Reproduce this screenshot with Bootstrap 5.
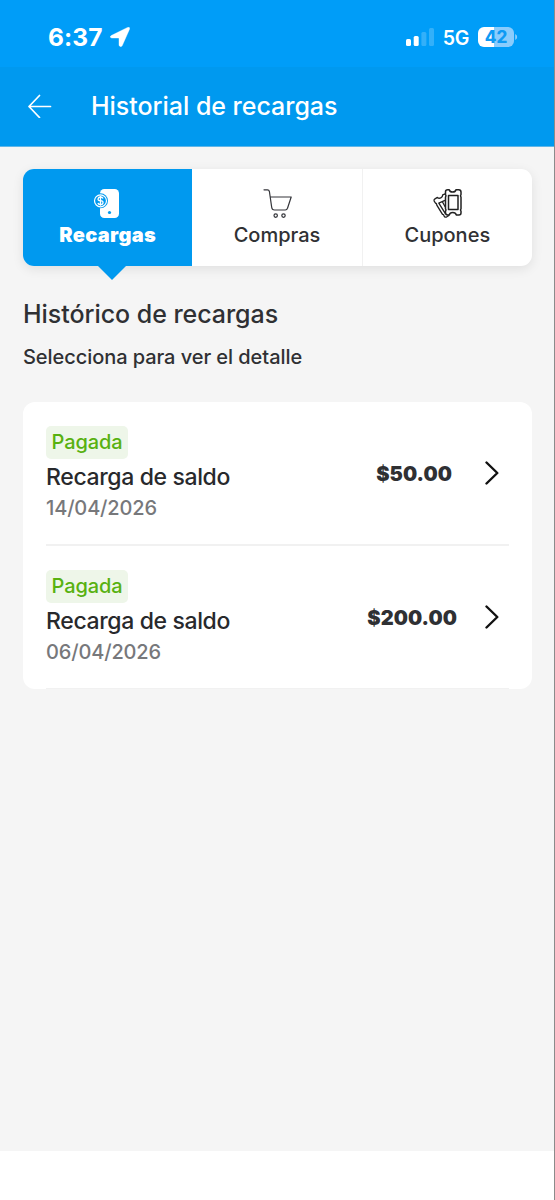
<!DOCTYPE html>
<html lang="es">
<head>
<meta charset="utf-8">
<meta name="viewport" content="width=device-width, initial-scale=1">
<title>Historial de recargas</title>
<link href="https://cdn.jsdelivr.net/npm/bootstrap@5.3.0/dist/css/bootstrap.min.css" rel="stylesheet">
<style>
  body { font-family: Inter, "Liberation Sans", sans-serif; color: #2f3033; background: #f5f5f5; }
  .screen { height: 1200px; border-right: 1px solid #8b8b8b; overflow: hidden; }
  svg { display: block; flex: none; }
  .app-head { background: linear-gradient(#009df8 0 67px, #0099ef 67px); height: 147px; border-bottom: 1px solid #5fb6e8; }
  .status { height: 67px; padding: 23px 36px 0 48px; }
  .clock { font-size: 24.5px; line-height: 28px; font-weight: 700; letter-spacing: .1px; }
  .net { font-size: 19.5px; line-height: 30px; font-weight: 600; letter-spacing: -.3px; margin: 0 9px; }
  .battery { width: 36px; height: 20px; border-radius: 6px; margin-top: 4px; background: linear-gradient(90deg, #fff 16px, #8accfc 16px); color: #0d9bf4; font-size: 17px; line-height: 20px; font-weight: 800; }
  .bar { height: 79px; padding: 0 0 1px 27px; }
  .bar h1 { font-size: 25px; line-height: 30px; font-weight: 500; letter-spacing: -.03px; margin-left: 39px; }
  .content { height: 1004px; padding: 22px 22px 0 23px; }
  .tabs { height: 97px; border-radius: 11px; background: #fff; box-shadow: 0 3px 12px rgba(0,0,0,.09); }
  .tabs button { flex: 1 1 0; border: 0; background: none; padding: 18px 0 0; color: #303134; font-size: 20px; line-height: 28px; font-weight: 500; }
  .tabs button + button + button { border-left: 1px solid #f1f1f1; }
  .tabs svg { width: 34px; height: 34px; }
  .tabs .chosen { background: #0099ef; color: #fff; font-weight: 900; letter-spacing: .35px; border-radius: 11px 0 0 11px; }
  .chosen svg { margin-right: 5px; }
  .chosen::after { content: ""; position: absolute; left: 75px; top: 97px; border: 14px solid transparent; border-bottom: 0; border-top-color: #0099ef; }
  h2 { font-size: 25px; line-height: 30px; font-weight: 500; letter-spacing: -.05px; margin: 33px 0 0; }
  .hint { font-size: 20px; line-height: 26px; font-weight: 500; letter-spacing: -.06px; margin: 15px 0 0; }
  .history { margin-top: 32px; height: 287px; padding: 0 23px; background: #fff; border-radius: 12px; }
  .entry { height: 144px; padding-top: 24px; border-bottom: 2px solid #f1f1f1; }
  .entry:last-child { height: 143px; border-bottom: 1px solid #f1f1f1; }
  .paid { width: 82px; height: 33px; border-radius: 5px; background: #eef6e9; color: #58b110; font-size: 20px; line-height: 33px; font-weight: 500; letter-spacing: -.1px; text-align: center; }
  .what { font-size: 23px; line-height: 30px; font-weight: 500; letter-spacing: -.36px; margin-top: 3px; color: #28292c; }
  .when { font-size: 20px; line-height: 26px; font-weight: 500; letter-spacing: -.15px; margin-top: 3px; color: #77787b; }
  .amount { font-size: 20px; line-height: 26px; font-weight: 900; letter-spacing: .05px; margin: 35px 33px 0 0; }
  .entry:last-child .amount { margin-right: 28px; }
  .go { margin: 36px 10px 0 0; }
  .entry:last-child .go, .entry:first-child .go { margin-top: 35px; }
  .foot { height: 49px; background: #fff; }
</style>
</head>
<body>
<div class="screen">
  <header class="app-head text-white">
    <div class="status d-flex align-items-start">
      <span class="clock">6:37</span>
      <svg class="mt-1" width="20" height="20" viewBox="0 0 20 20" style="margin-left:7px"><path d="M1.2 8.6 17.6.4Q20.1-.3 19.5 2.2L12.2 18.7Q10.6 20.7 9 18.5V11.4Q9 11 8.6 11H1.7Q-1 10.2 1.2 8.6Z" fill="#fff" stroke="#fff" stroke-width=".4"/></svg>
      <svg class="ms-auto" width="28" height="18" viewBox="0 0 28 18" style="margin-top:5px"><g fill="#fff"><rect y="11" width="5" height="7" rx="1.5"/><rect x="7.7" y="8" width="5" height="10" rx="1.5"/><g opacity=".2"><rect x="15.4" y="4" width="5" height="14" rx="1.5"/><rect x="23" width="5" height="18" rx="1.5"/></g></g></svg>
      <span class="net">5G</span>
      <span class="battery text-center">42</span>
      <svg width="4" height="8" viewBox="0 0 4 8" style="margin-top:10px"><path d="M1.2 1Q3.2 2 3.2 4T1.2 7Z" fill="#8accfc"/></svg>
    </div>
    <div class="bar d-flex align-items-center">
      <svg width="25" height="24" viewBox="0 0 25 24" fill="none" stroke="#fff" stroke-width="1.7" stroke-linecap="round" stroke-linejoin="round"><path d="M23.5 12.5H2M12.5 1.5 2 12.5l10.5 11"/></svg>
      <h1 class="mb-0">Historial de recargas</h1>
    </div>
  </header>
  <main class="content">
    <nav class="tabs d-flex position-relative">
      <button class="chosen d-flex flex-column align-items-center">
        <svg viewBox="0 0 34 34"><rect x="12" y="2" width="19" height="29" rx="4.3" fill="#fff"/><circle cx="21.5" cy="25.5" r="1.6" fill="#0099ef"/><circle cx="12.5" cy="13.8" r="7.5" fill="#0099ef"/><circle cx="12.5" cy="13.8" r="6" fill="#0099ef" stroke="#fff" stroke-width="1.2"/><path d="M15 11.5Q14.5 10 12.5 10T10.1 11.8 12.5 13.7 15 15.8 12.5 17.6 10 16M12.5 8.8V18.8" fill="none" stroke="#fff" stroke-width="1.35"/></svg>
        <span>Recargas</span>
      </button>
      <button class="d-flex flex-column align-items-center">
        <svg viewBox="0 0 34 34" fill="none" stroke="#34353a" stroke-width="1.2" stroke-linecap="round" stroke-linejoin="round"><path d="M4 2.8H7.5Q9 2.8 9.4 4.5L11.7 20.3Q12 23 14.5 23H25.3Q26.9 23 27.5 21.3L31.2 10H10.2"/><circle cx="15.7" cy="28.6" r="1.7"/><circle cx="23.5" cy="28.6" r="1.7"/></svg>
        <span>Compras</span>
      </button>
      <button class="d-flex flex-column align-items-center">
        <svg viewBox="0 0 34 34" fill="none" stroke="#222" stroke-width="1.5" stroke-linejoin="round"><path d="M15.5 4.8Q15.5 2.7 17.7 2.7H19.2C20 5.8 25.2 5.8 26 2.7H28.7Q31 2.7 31 5V7.6Q30 8.8 31 10.2V21.7Q30 23 31 24.3V26Q31 28 28.9 28H26.4C25.4 24.8 20 24.8 19.2 28H17.7Q15.5 28 15.5 25.8V24.3Q16.5 23 15.5 21.7V10.2Q16.5 8.8 15.5 7.6Z"/><path d="M18.5 8.6h9.5v14h-9.5Z"/><path d="M15.2 6.8 12.7 7.9C12.8 10.5 9.3 12.2 7.4 10.4L5 11.8Q3.5 13 4.2 14.2L5.4 16Q6.8 16.4 6.8 18.1L12.5 27.3Q13.9 27.4 14.1 28.9 14.8 30.8 16.8 29.8L19 28.4M15 13.4 8.8 16.2 15.4 26.6M12.5 15 15.3 20" stroke-width="1.35"/></svg>
        <span>Cupones</span>
      </button>
    </nav>
    <h2>Histórico de recargas</h2>
    <p class="hint">Selecciona para ver el detalle</p>
    <section class="history">
      <article class="entry d-flex">
        <div><div class="paid">Pagada</div><div class="what">Recarga de saldo</div><div class="when">14/04/2026</div></div>
        <div class="amount ms-auto">$50.00</div>
        <svg class="go" width="14" height="24" viewBox="0 0 14 24" fill="none" stroke="#111" stroke-width="2.4" stroke-linecap="round" stroke-linejoin="round"><path d="M1.5 1.5 12.3 12 1.5 22.5"/></svg>
      </article>
      <article class="entry d-flex">
        <div><div class="paid">Pagada</div><div class="what">Recarga de saldo</div><div class="when">06/04/2026</div></div>
        <div class="amount ms-auto">$200.00</div>
        <svg class="go" width="14" height="24" viewBox="0 0 14 24" fill="none" stroke="#111" stroke-width="2.4" stroke-linecap="round" stroke-linejoin="round"><path d="M1.5 1.5 12.3 12 1.5 22.5"/></svg>
      </article>
    </section>
  </main>
  <footer class="foot"></footer>
</div>
<script src="https://cdn.jsdelivr.net/npm/bootstrap@5.3.0/dist/js/bootstrap.bundle.min.js"></script>
</body>
</html>
